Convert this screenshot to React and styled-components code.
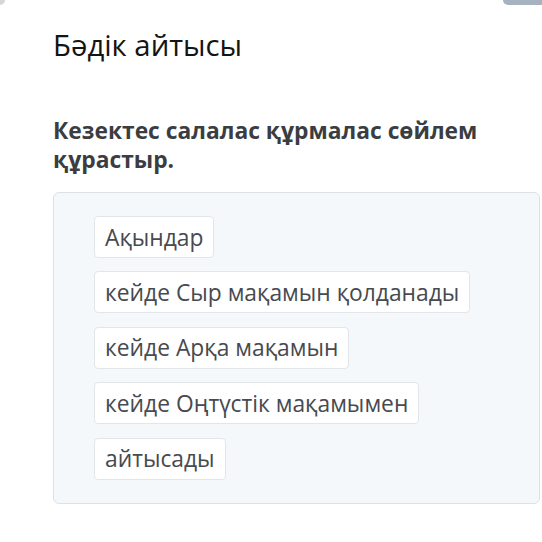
import React from "react";
import styled, { createGlobalStyle } from "styled-components";

const Global = createGlobalStyle`
  html, body { margin: 0; padding: 0; background: #ffffff; }
  body { font-family: "Open Sans", "Noto Sans", sans-serif; }
`;

const Page = styled.div`
  width: 542px;
  height: 542px;
  overflow: hidden;
  background: #ffffff;
`;

const EdgeBar = styled.div`
  display: flex;
  justify-content: space-between;
  align-items: flex-start;
  height: 6px;
`;

const CornerStub = styled.div`
  width: 5px;
  height: 5px;
  background: #d6d6d6;
  border-bottom-right-radius: 5px;
`;

const TopButtonStub = styled.div`
  width: 39px;
  height: 5px;
  background: #a6b2c0;
  border-bottom-left-radius: 6px;
`;

const Content = styled.div`
  padding: 0 2px 0 53px;
`;

const Title = styled.h1`
  margin: 19.5px 0 0;
  font-size: 29.3px;
  line-height: 38px;
  font-weight: 400;
  color: #141414;
`;

const Question = styled.h2`
  margin: 52px 0 0;
  font-size: 22.8px;
  line-height: 29px;
  font-weight: 700;
  color: #3a3d42;
`;

const Panel = styled.div`
  margin-top: 18px;
  display: flex;
  flex-direction: column;
  align-items: flex-start;
  gap: 13.4px;
  padding: 23.5px 40px 23.5px 40px;
  background: #f5f8fb;
  border: 1px solid #dde1e6;
  border-radius: 6px;
`;

const Chip = styled.div`
  display: flex;
  align-items: center;
  height: 42px;
  box-sizing: border-box;
  padding: 0 10px;
  background: #ffffff;
  border: 1px solid #e2e5e9;
  border-radius: 4px;
  font-size: 22.8px;
  color: #474a4f;
  white-space: nowrap;
`;

const parts = [
  "Ақындар",
  "кейде Сыр мақамын қолданады",
  "кейде Арқа мақамын",
  "кейде Оңтүстік мақамымен",
  "айтысады",
];

export default function App() {
  return (
    <Page>
      <Global />
      <EdgeBar>
        <CornerStub />
        <TopButtonStub />
      </EdgeBar>
      <Content>
        <Title>Бәдік айтысы</Title>
        <Question>Кезектес салалас құрмалас сөйлем құрастыр.</Question>
        <Panel>
          {parts.map((p) => (
            <Chip key={p}>{p}</Chip>
          ))}
        </Panel>
      </Content>
    </Page>
  );
}
